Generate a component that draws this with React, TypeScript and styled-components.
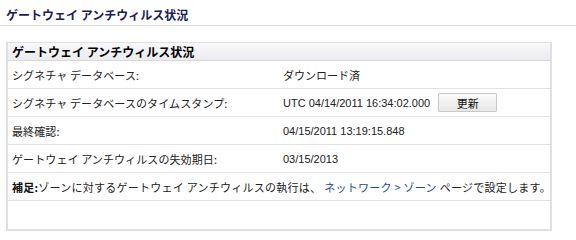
import React from "react";
import styled, { createGlobalStyle } from "styled-components";

const Global = createGlobalStyle`
  html, body { margin: 0; padding: 0; background: #fff; }
  body { font-family: "Noto Sans CJK JP", "Liberation Sans", sans-serif; }
`;

const Page = styled.div`
  width: 576px;
  height: 240px;
  background: #fff;
  overflow: hidden;
`;

const Title = styled.h1`
  margin: 0;
  height: 26px;
  box-sizing: border-box;
  padding: 8px 0 0 6px;
  font-size: 12px;
  line-height: 14px;
  font-weight: bold;
  color: #1b1b5a;
  border-bottom: 1px solid #dedede;
`;

const Panel = styled.div`
  margin: 16px 0 0 6px;
  width: 546px;
  height: 189px;
  box-sizing: border-box;
  border: 2px solid #e0e0e0;
  border-top-width: 1px;
  display: flex;
  flex-direction: column;
`;

const Header = styled.div`
  height: 18px;
  box-sizing: border-box;
  padding: 2px 0 0 4px;
  background: linear-gradient(#f9f9fb, #ebebf0);
  border-bottom: 1px solid #d8d8d8;
  font-size: 12px;
  line-height: 14px;
  font-weight: bold;
  color: #000;
`;

const Row = styled.div`
  display: grid;
  grid-template-columns: 271px 1fr;
  align-items: center;
  height: 28px;
  box-sizing: border-box;
  padding-left: 4px;
  border-bottom: 1px solid #e2e2e2;
  font-size: 11px;
  color: #222;
`;

const Label = styled.span`
  white-space: nowrap;
  letter-spacing: 0.1px;
`;

const Value = styled.span<{ $latin?: boolean }>`
  display: flex;
  align-items: center;
  gap: 8px;
  white-space: nowrap;
  font-family: ${(p) =>
    p.$latin ? `"Liberation Sans", Arial, sans-serif` : `"Noto Sans CJK JP", sans-serif`};
  font-size: 11px;
`;

const Button = styled.button`
  width: 59px;
  height: 19px;
  padding: 0;
  border: 1px solid #c8c8c8;
  border-radius: 1px;
  background: linear-gradient(#fbfbfb, #e6e6e6);
  font-family: "Noto Sans CJK JP", sans-serif;
  font-size: 11px;
  color: #111;
`;

const NoteRow = styled.div`
  display: flex;
  align-items: center;
  height: 28px;
  box-sizing: border-box;
  padding-left: 4px;
  border-bottom: 1px solid #e2e2e2;
  font-size: 11px;
  letter-spacing: 0.25px;
  color: #222;
  white-space: nowrap;
`;

const Bold = styled.b`
  font-weight: bold;
  color: #111;
`;

const Link = styled.a`
  color: #1c4aa0;
  text-decoration: none;
  margin: 0 3px;
`;

export default function App() {
  return (
    <Page>
      <Global />
      <Title>ゲートウェイ アンチウィルス状況</Title>
      <Panel>
        <Header>ゲートウェイ アンチウィルス状況</Header>
        <Row>
          <Label>シグネチャ データベース:</Label>
          <Value>ダウンロード済</Value>
        </Row>
        <Row>
          <Label>シグネチャ データベースのタイムスタンプ:</Label>
          <Value $latin>
            UTC 04/14/2011 16:34:02.000
            <Button>更新</Button>
          </Value>
        </Row>
        <Row>
          <Label>最終確認:</Label>
          <Value $latin>04/15/2011 13:19:15.848</Value>
        </Row>
        <Row>
          <Label>ゲートウェイ アンチウィルスの失効期日:</Label>
          <Value $latin>03/15/2013</Value>
        </Row>
        <NoteRow>
          <Bold>補足:</Bold>ゾーンに対するゲートウェイ アンチウィルスの執行は、
          <Link href="#">ネットワーク &gt; ゾーン</Link>ページで設定します。
        </NoteRow>
      </Panel>
    </Page>
  );
}
